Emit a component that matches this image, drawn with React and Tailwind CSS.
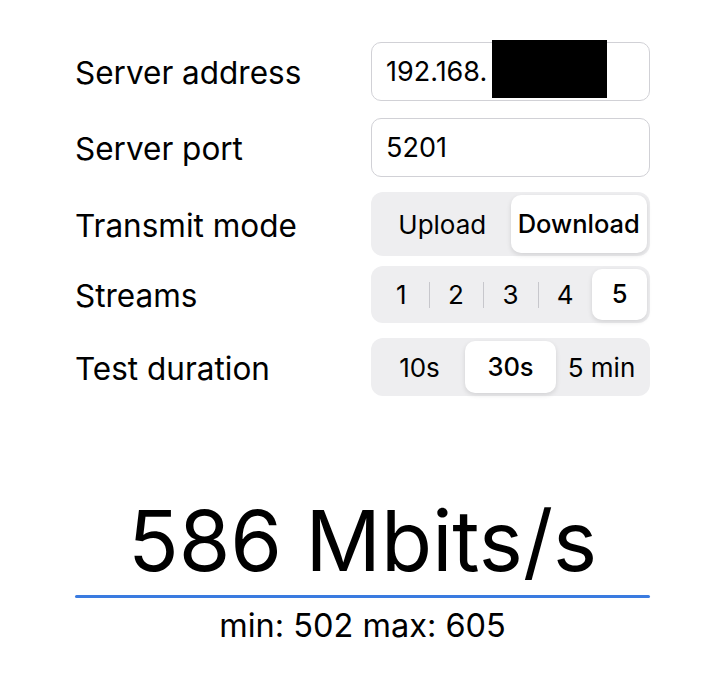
import React from "react";

function Field({ children }) {
  return (
    <div className="relative flex h-[59px] w-[279px] items-center rounded-[10px] border border-[#d1d1d6] bg-white px-[14px] pt-[1px] text-[27px] text-black">
      {children}
    </div>
  );
}

function Segmented({ items, active, height, dividers }) {
  return (
    <div
      className={`flex w-[279px] items-stretch rounded-[12px] bg-[#eeeef0] p-[3px] ${height}`}
    >
      {items.map((item, i) => {
        const on = i === active;
        const showDivider =
          dividers && i > 0 && i !== active && i - 1 !== active;
        return (
          <div key={item} className="relative flex flex-1 items-center justify-center">
            {showDivider && (
              <span className="absolute left-0 top-1/2 h-[26px] w-px -translate-y-1/2 bg-[#c7c7cc]" />
            )}
            <div
              className={`flex h-full w-full items-center justify-center rounded-[10px] text-black ${
                on
                  ? "bg-white text-[25.5px] font-medium shadow-[0_2px_5px_rgba(0,0,0,0.12)]"
                  : "text-[26px]"
              }`}
            >
              {item}
            </div>
          </div>
        );
      })}
    </div>
  );
}

function Row({ label, children, className }) {
  return (
    <div className={`flex items-center justify-between ${className}`}>
      <span className="pt-[3px] text-[31.5px] text-black">{label}</span>
      {children}
    </div>
  );
}

export default function App() {
  return (
    <div className="min-h-[689px] w-[718px] bg-white pl-[75px] pr-[68px] pt-[42px] font-['Inter',sans-serif]">
      <Row label="Server address">
        <Field>
          192.168.
          <span className="absolute left-[120px] top-[-3px] h-[58px] w-[115px] bg-black" />
        </Field>
      </Row>
      <Row label="Server port" className="mt-[17px]">
        <Field>5201</Field>
      </Row>
      <Row label="Transmit mode" className="mt-[15px]">
        <Segmented items={["Upload", "Download"]} active={1} height="h-[64px]" />
      </Row>
      <Row label="Streams" className="mt-[10px]">
        <Segmented items={["1", "2", "3", "4", "5"]} active={4} height="h-[57px]" dividers />
      </Row>
      <Row label="Test duration" className="mt-[15px]">
        <Segmented items={["10s", "30s", "5 min"]} active={1} height="h-[58px]" />
      </Row>

      <div className="mt-[95px] flex flex-col items-center">
        <div className="text-[83.5px] leading-[100px] text-black">586 Mbits/s</div>
        <div className="mt-[4px] h-[3px] w-full rounded-full bg-[#3a7be0]" />
        <div className="mt-[9px] text-[32.5px] leading-[38px] text-black">min: 502 max: 605</div>
      </div>
    </div>
  );
}
